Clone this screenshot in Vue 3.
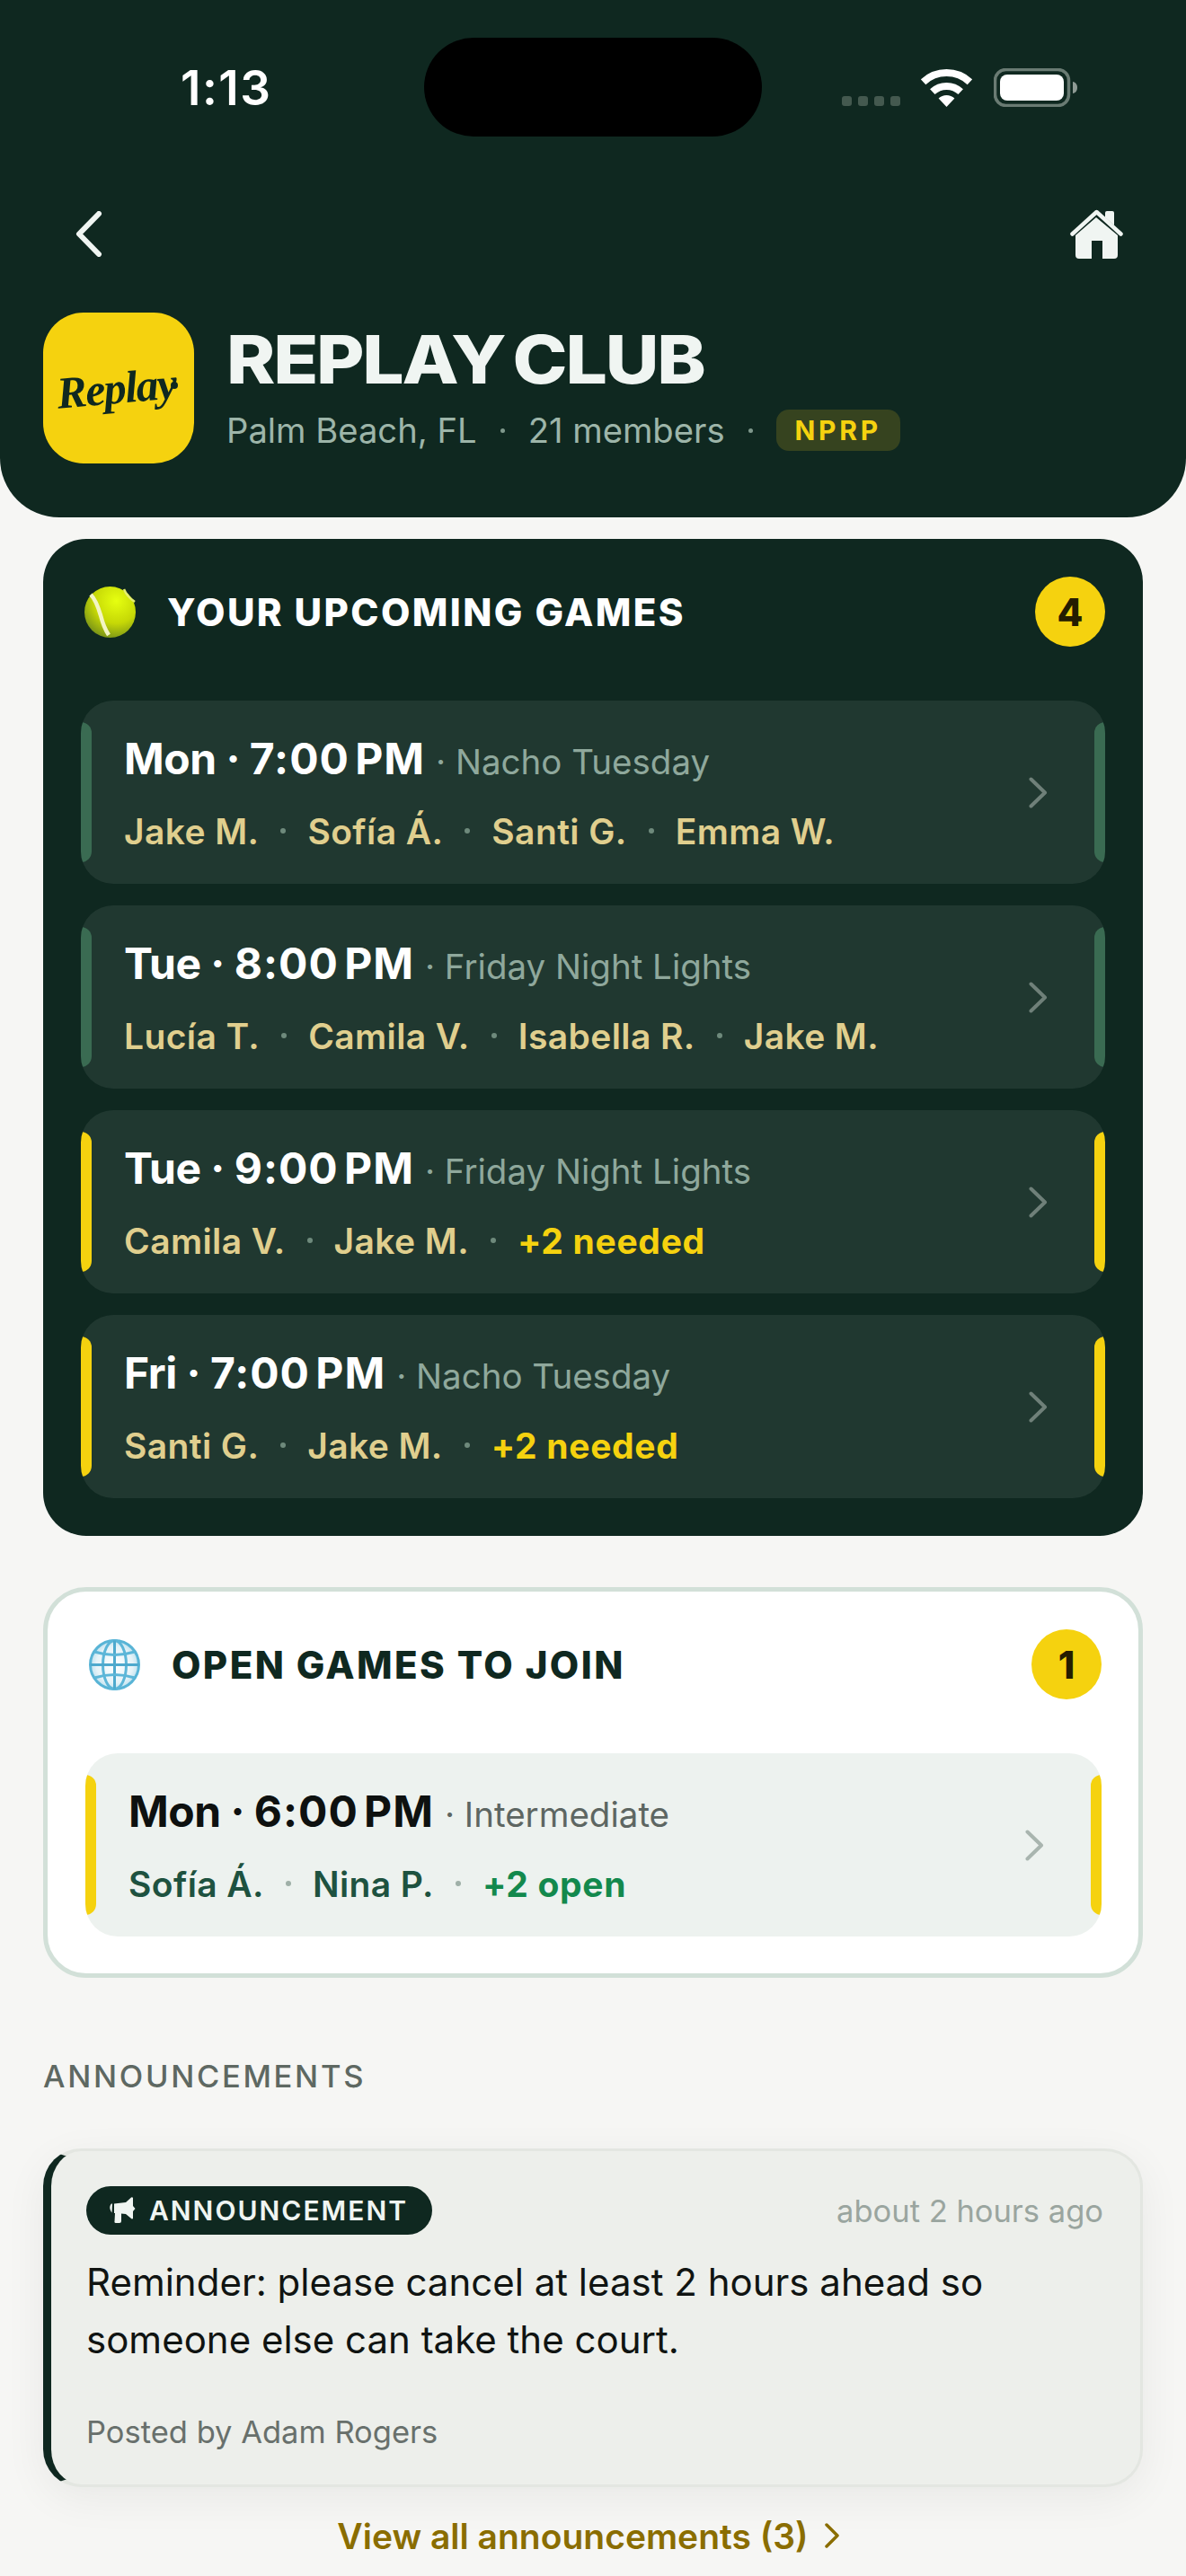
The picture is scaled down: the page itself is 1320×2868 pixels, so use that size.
<script setup>
const upcoming = [
  { day: 'Mon', time: '7:00 PM', label: 'Nacho Tuesday', names: ['Jake M.', 'Sofía Á.', 'Santi G.', 'Emma W.'], extra: '', full: true },
  { day: 'Tue', time: '8:00 PM', label: 'Friday Night Lights', names: ['Lucía T.', 'Camila V.', 'Isabella R.', 'Jake M.'], extra: '', full: true },
  { day: 'Tue', time: '9:00 PM', label: 'Friday Night Lights', names: ['Camila V.', 'Jake M.'], extra: '+2 needed', full: false },
  { day: 'Fri', time: '7:00 PM', label: 'Nacho Tuesday', names: ['Santi G.', 'Jake M.'], extra: '+2 needed', full: false }
]

const openGames = [
  { day: 'Mon', time: '6:00 PM', label: 'Intermediate', names: ['Sofía Á.', 'Nina P.'], extra: '+2 open', full: false }
]
</script>

<template>
  <div class="page">
    <header class="hero">
      <div class="status">
        <div class="status__time">1:13</div>
        <div class="status__island"></div>
        <div class="status__icons">
          <div class="signal"><i></i><i></i><i></i><i></i></div>
          <svg class="wifi" width="57" height="42" viewBox="0 0 57 42" fill="none">
            <path d="M2.6 14.2A38 38 0 0 1 54.4 14.2" stroke="#fff" stroke-width="8" />
            <path d="M12.8 25.2A23 23 0 0 1 44.2 25.2" stroke="#fff" stroke-width="8" />
            <path d="M28.5 42L19.6 32.5A13 13 0 0 1 37.4 32.5Z" fill="#fff" />
          </svg>
          <svg class="battery" width="93" height="43" viewBox="0 0 93 43" fill="none">
            <rect x="1.5" y="1.5" width="82" height="40" rx="12" stroke="#6a7b73" stroke-width="3.5" />
            <rect x="7" y="7" width="71" height="29" rx="8" fill="#fff" />
            <path d="M88 15C91 15.500 93 18 93 21.500C93 25 91 27.500 88 28Z" fill="#8e9a94" />
          </svg>
        </div>
      </div>

      <nav class="nav">
        <svg width="30" height="51" viewBox="0 0 30 51" fill="none">
          <path d="M26 3L4 25.500L26 48" stroke="#f0f5f2" stroke-width="6" stroke-linecap="round" stroke-linejoin="round" />
        </svg>
        <svg width="59" height="55" viewBox="0 0 59 55" fill="#f0f5f2">
          <path d="M29 9L6 29V51Q6 55 10 55H24V35H36V55H49Q53 55 53 51V29Z" />
          <path d="M39 9V4Q39 2 41 2H47Q49 2 49 4V18Z" />
          <path d="M2.500 27.500L29.500 3L56.500 27.500" fill="none" stroke="#f0f5f2" stroke-width="4.500" stroke-linecap="round" stroke-linejoin="round" />
        </svg>
      </nav>

      <div class="brand">
        <div class="brand__logo">
          <span class="brand__script">Replay</span><i class="brand__dot"></i>
        </div>
        <div class="brand__text">
          <h1 class="brand__name">REPLAY CLUB</h1>
          <div class="brand__meta">
            <span>Palm Beach, FL</span>
            <i class="dot dot--meta"></i>
            <span>21 members</span>
            <i class="dot dot--meta"></i>
            <span class="brand__tag">NPRP</span>
          </div>
        </div>
      </div>
    </header>

    <main class="main">
      <section class="card card--dark">
        <div class="card__head">
          <svg class="card__emoji" width="57" height="57" viewBox="0 0 57 57">
            <defs>
              <radialGradient id="ball" cx="0.62" cy="0.28" r="0.8">
                <stop offset="0" stop-color="#e6ff10" />
                <stop offset="0.55" stop-color="#c6d806" />
                <stop offset="1" stop-color="#6f8a1a" />
              </radialGradient>
            </defs>
            <circle cx="28.500" cy="28.500" r="28.500" fill="url(#ball)" />
            <path d="M7 9C12 14 15 22 18 32C20 40 23 48 27 54" fill="none" stroke="#f3f5c4" stroke-width="4.500" />
            <path d="M44 3C46 8 50 13 56 17" fill="none" stroke="#e4ee70" stroke-width="2.500" />
          </svg>
          <h2 class="card__title">YOUR UPCOMING GAMES</h2>
          <span class="card__count">4</span>
        </div>
        <div class="rows">
          <a
            v-for="(game, i) in upcoming"
            :key="i"
            :class="['row', game.full === true && 'row--full']"
          >
            <i class="row__bar"></i>
            <div class="row__body">
              <div class="row__top">
                <span class="row__time">{{ game.day }} · <span class="row__clock">{{ game.time }}</span></span>
                <span class="row__label">· {{ game.label }}</span>
              </div>
              <div class="row__names">
                <template v-for="(name, n) in game.names" :key="name">
                  <i v-if="n > 0" class="dot"></i>
                  <span>{{ name }}</span>
                </template>
                <template v-if="game.extra">
                  <i class="dot"></i>
                  <span class="row__extra">{{ game.extra }}</span>
                </template>
              </div>
            </div>
            <svg class="row__chev" width="21" height="35" viewBox="0 0 21 35" fill="none">
              <path d="M2.500 2.500L18 17.500L2.500 32.500" stroke="#6f8079" stroke-width="4" stroke-linecap="round" stroke-linejoin="round" />
            </svg>
            <i class="row__bar row__bar--end"></i>
          </a>
        </div>
      </section>

      <section class="card card--light">
        <div class="card__head">
          <svg class="card__emoji card__emoji--globe" width="57" height="57" viewBox="0 0 57 57" fill="none">
            <defs>
              <radialGradient id="sea" cx="0.5" cy="0.5" r="0.5">
                <stop offset="0" stop-color="#ffffff" />
                <stop offset="0.75" stop-color="#e6f3f8" />
                <stop offset="1" stop-color="#bfe2ef" />
              </radialGradient>
            </defs>
            <circle cx="28.500" cy="28.500" r="27" fill="url(#sea)" stroke="#58b4d6" stroke-width="3" />
            <ellipse cx="28.500" cy="28.500" rx="13" ry="27" stroke="#5cb6d8" stroke-width="3" />
            <path d="M28.500 1.500V55.500M1.500 28.500H55.500" stroke="#4ea9cd" stroke-width="3" />
            <path d="M6 14Q28.500 21 51 14M6 43Q28.500 36 51 43" stroke="#5cb6d8" stroke-width="3" />
          </svg>
          <h2 class="card__title">OPEN GAMES TO JOIN</h2>
          <span class="card__count">1</span>
        </div>
        <div class="rows">
          <a v-for="(game, i) in openGames" :key="i" class="row row--light">
            <i class="row__bar"></i>
            <div class="row__body">
              <div class="row__top">
                <span class="row__time">{{ game.day }} · <span class="row__clock">{{ game.time }}</span></span>
                <span class="row__label">· {{ game.label }}</span>
              </div>
              <div class="row__names">
                <template v-for="(name, n) in game.names" :key="name">
                  <i v-if="n > 0" class="dot"></i>
                  <span>{{ name }}</span>
                </template>
                <i class="dot"></i>
                <span class="row__extra">{{ game.extra }}</span>
              </div>
            </div>
            <svg class="row__chev" width="21" height="35" viewBox="0 0 21 35" fill="none">
              <path d="M2.500 2.500L18 17.500L2.500 32.500" stroke="#a9b5af" stroke-width="4" stroke-linecap="round" stroke-linejoin="round" />
            </svg>
            <i class="row__bar row__bar--end"></i>
          </a>
        </div>
      </section>

      <h3 class="section-label">ANNOUNCEMENTS</h3>

      <article class="notice">
        <div class="notice__top">
          <span class="notice__pill">
            <svg width="30" height="30" viewBox="0 0 30 30" fill="#f0f5f2">
              <path d="M3 7.500C0.500 10 0.800 14 3.500 17.500L4 7.500Z" />
              <path d="M6 7.500L19 6L24 1.500Q26 -0.500 27 1V10L29.500 13L27 16V24Q26 25 24.500 23.500L19 19L14 18.500V27Q14 29 12 29H8Q6 29 6.500 27L7 18H6Z" />
            </svg>
            ANNOUNCEMENT
          </span>
          <span class="notice__when">about 2 hours ago</span>
        </div>
        <p class="notice__text">Reminder: please cancel at least 2 hours ahead so someone else can take the court.</p>
        <div class="notice__by">Posted by Adam Rogers</div>
      </article>

      <a class="view-all">
        View all announcements (3)
        <svg width="16" height="28" viewBox="0 0 16 28" fill="none">
          <path d="M2 2L14 14L2 26" stroke="#8a6d00" stroke-width="3.500" stroke-linecap="round" stroke-linejoin="round" />
        </svg>
      </a>
    </main>
  </div>
</template>

<style scoped>
.page {
  width: 1320px;
  height: 2868px;
  overflow: hidden;
  background: #f6f6f4;
  font-family: Inter, "Liberation Sans", sans-serif;
}

.hero {
  height: 576px;
  box-sizing: border-box;
  background: #0f2820;
  border-radius: 0 0 66px 66px;
  overflow: hidden;
}

.status {
  display: grid;
  grid-template-columns: 472px 376px 472px;
  height: 110px;
  padding-top: 42px;
  align-items: center;
}

.status__time {
  padding: 2px 0 0 201px;
  color: #fff;
  font-size: 53px;
  font-weight: 600;
  letter-spacing: 1.5px;
}

.status__island {
  height: 110px;
  border-radius: 55px;
  background: #000;
}

.status__icons {
  display: flex;
  align-items: flex-end;
  padding-left: 89px;
}

.signal {
  display: flex;
  gap: 7px;
  width: 88px;
  padding-bottom: 1px;
}

.signal i {
  width: 11px;
  height: 11px;
  border-radius: 3px;
  background: #44594f;
}

.battery {
  margin-left: 24px;
}

.nav {
  display: flex;
  justify-content: space-between;
  align-items: center;
  margin-top: 81px;
  padding: 0 70px 0 84px;
  height: 55px;
}

.brand {
  display: flex;
  margin-top: 60px;
  padding-left: 48px;
  gap: 36px;
}

.brand__logo {
  position: relative;
  display: flex;
  align-items: center;
  justify-content: center;
  width: 168px;
  height: 168px;
  border-radius: 45px;
  background: #f5d20f;
}

.brand__script {
  margin: 0 6px 0 0;
  color: #0f2820;
  font-family: "Liberation Serif", serif;
  font-size: 50px;
  font-style: italic;
  font-weight: 700;
  letter-spacing: -1.5px;
  transform: rotate(-5deg);
}

.brand__dot {
  position: absolute;
  top: 77px;
  right: 18px;
  width: 8px;
  height: 8px;
  border-radius: 50%;
  background: #0f2820;
}

.brand__text {
  padding-top: 22px;
}

.brand__name {
  margin: 0;
  color: #f0f5f2;
  font-size: 74px;
  font-weight: 800;
  line-height: 60px;
  letter-spacing: -2px;
  word-spacing: -6px;
  white-space: nowrap;
  transform: scaleX(1.11);
  transform-origin: left center;
}

.brand__meta {
  display: flex;
  align-items: center;
  gap: 26px;
  height: 54px;
  margin-top: 22px;
  color: #9db5a9;
  font-size: 38.2px;
}

.brand__tag {
  padding: 0 21px;
  border-radius: 14px;
  background: #36431f;
  color: #f5d20f;
  font-size: 30px;
  font-weight: 700;
  line-height: 46px;
  letter-spacing: 3.7px;
}

.dot {
  flex: none;
  width: 6px;
  height: 6px;
  border-radius: 50%;
  background: #6e8a7c;
}

.dot--meta {
  width: 5px;
  height: 5px;
  background: #7f988c;
}

.main {
  padding: 24px 48px 0;
}

.card {
  box-sizing: border-box;
  padding: 42px;
  border-radius: 48px;
}

.card--dark {
  background: #0f2820;
}

.card--light {
  margin-top: 57px;
  padding: 42px 41px 41px 42px;
  border: 5px solid #d2e0d8;
  background: #fff;
}

.card__head {
  display: flex;
  align-items: center;
  height: 78px;
  margin-bottom: 60px;
}

.card__emoji {
  margin-left: 4px;
}

.card__emoji--globe {
  margin-left: 4px;
}

.card__title {
  flex: 1;
  margin: 0 0 0 35px;
  color: #fff;
  font-size: 42px;
  font-weight: 800;
  letter-spacing: 2.4px;
}

.card--light .card__title {
  color: #0f2820;
}

.card__count {
  display: flex;
  align-items: center;
  justify-content: center;
  width: 78px;
  height: 78px;
  border-radius: 50%;
  background: #f5d20f;
  color: #241c00;
  font-size: 42px;
  font-weight: 800;
}

.rows {
  display: flex;
  flex-direction: column;
  gap: 24px;
}

.row {
  position: relative;
  display: flex;
  align-items: center;
  justify-content: space-between;
  height: 204px;
  padding: 0 64px 0 48px;
  overflow: hidden;
  border-radius: 36px;
  background: #203830;
  --bar: #f5d20f;
}

.row--full {
  --bar: #3a6b52;
}

.row--light {
  background: #edf2ef;
}

.row__bar {
  position: absolute;
  top: 24px;
  bottom: 24px;
  left: 0;
  width: 12px;
  border-radius: 0 12px 12px 0;
  background: var(--bar);
}

.row__bar--end {
  right: 0;
  left: auto;
  border-radius: 12px 0 0 12px;
}

.row__body {
  padding-top: 6px;
}

.row__top {
  display: flex;
  align-items: baseline;
  gap: 12px;
  height: 54px;
  line-height: 54px;
}

.row__time {
  color: #fff;
  font-size: 48px;
  font-weight: 700;
  letter-spacing: -0.5px;
}

.row__clock {
  letter-spacing: 1px;
  word-spacing: -6px;
}

.row__label {
  color: #8fa89c;
  font-size: 38.5px;
}

.row__names {
  display: flex;
  align-items: center;
  gap: 24px;
  height: 54px;
  margin-top: 26px;
  color: #e0cf8e;
  font-size: 39px;
  font-weight: 600;
  letter-spacing: 0.4px;
}

.row__extra {
  color: #f5d20f;
  font-weight: 700;
  letter-spacing: 0.7px;
}

.row--light .row__time {
  color: #0e1110;
}

.row--light .row__label {
  color: #5d6662;
}

.row--light .row__names {
  color: #1e5240;
}

.row--light .row__extra {
  color: #13894d;
}

.row--light .dot {
  background: #9fb0a8;
}

.section-label {
  margin: 88px 0 0;
  color: #5e6862;
  font-size: 34.5px;
  font-weight: 500;
  line-height: 44px;
  letter-spacing: 2.7px;
}

.notice {
  box-sizing: border-box;
  height: 377px;
  margin-top: 58px;
  padding: 39px 41px 0 39px;
  border: 3px solid #e3e6e1;
  border-left: 9px solid #0f2820;
  border-radius: 42px;
  background: #edefeb;
  box-shadow: 0 12px 48px rgba(0, 0, 0, 0.06);
}

.notice__top {
  display: flex;
  align-items: center;
  justify-content: space-between;
}

.notice__pill {
  display: flex;
  align-items: center;
  gap: 15px;
  height: 54px;
  padding: 0 27px 0 25px;
  border-radius: 27px;
  background: #0f2820;
  color: #f0f5f2;
  font-size: 30px;
  font-weight: 600;
  letter-spacing: 2px;
}

.notice__when {
  color: #9aa59f;
  font-size: 34.5px;
}

.notice__text {
  margin: 21px 0 0;
  color: #101412;
  font-size: 42px;
  line-height: 64px;
}

.notice__by {
  margin-top: 47px;
  color: #68706c;
  font-size: 34.5px;
  line-height: 48px;
}

.view-all {
  display: flex;
  align-items: center;
  justify-content: center;
  gap: 18px;
  height: 54px;
  margin-top: 27px;
  padding-right: 11px;
  color: #8a6d00;
  font-size: 39px;
  font-weight: 600;
}
</style>

<style>
html,
body {
  background: #f6f6f4;
}
</style>
